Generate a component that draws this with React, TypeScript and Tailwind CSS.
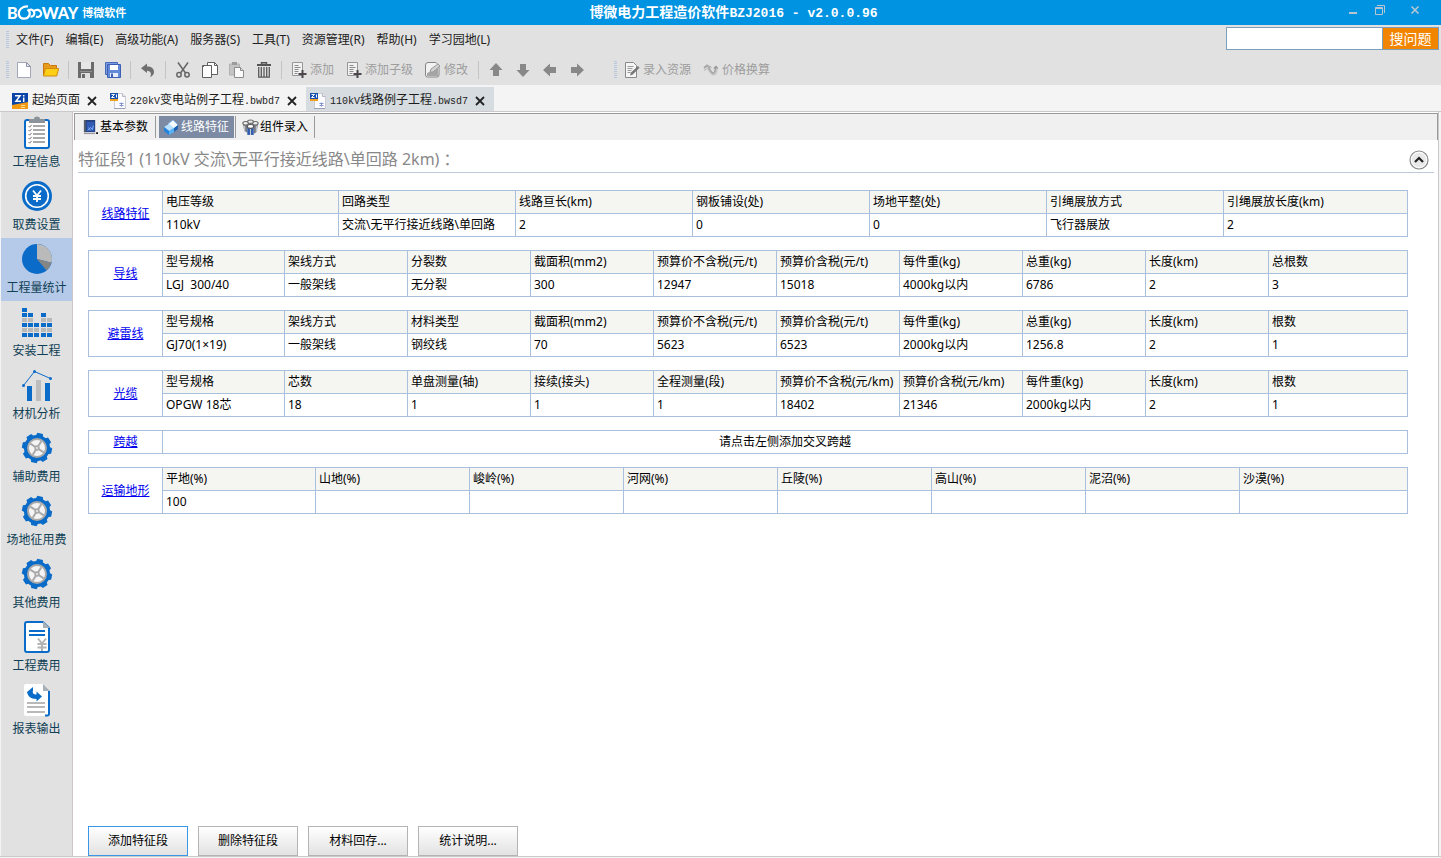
import React from "react";

type IconProps = { children: React.ReactNode; box?: string; className?: string };

function Svg({ children, box = "0 0 16 16", className = "h-4 w-4" }: IconProps) {
  return (
    <svg viewBox={box} className={`${className} shrink-0`} fill="none" aria-hidden="true">
      {children}
    </svg>
  );
}

/* ---------- toolbar icons ---------- */

const NewIcon = () => (
  <Svg>
    <path d="M1.5.5h9l4 4v11h-13z" fill="#fff" stroke="#a3a6b8" />
    <path d="M10.5.5v4h4z" fill="#e4e6ee" stroke="#8e92a8" strokeLinejoin="round" />
  </Svg>
);

const OpenIcon = () => (
  <Svg box="0 0 18 16" className="h-4 w-[18px]">
    <path d="M1.5 13V1.5h5l2 2h6V6" fill="#e79a1c" stroke="#c8780d" />
    <path d="M3.5 6.5h13.2l-2 7.5H1.4z" fill="#fdd017" stroke="#d08a10" />
  </Svg>
);

const SaveIcon = () => (
  <Svg>
    <path d="M0 0h16v16H0z" fill="#6b6b6b" />
    <path d="M3 0h10v7H3z" fill="#e6e6e6" />
    <path d="M2 9.5h12" stroke="#8e8e8e" />
    <path d="M3 11h9v5H3z" fill="#dedede" />
    <path d="M4 12h3v4H4z" fill="#6b6b6b" />
  </Svg>
);

const SaveAllIcon = () => (
  <Svg>
    <path d="M.5.5h12v12H.5z" fill="#7d9bdf" stroke="#4468ba" />
    <path d="M2.5 2.5h13v13h-13z" fill="#6288d8" stroke="#3d60b4" />
    <path d="M5 3h8v5H5z" fill="#fff" />
    <path d="M5 11h8v4H5z" fill="#e7edfb" />
    <path d="M6 11.5h2V15H6z" fill="#3d60b4" />
  </Svg>
);

const UndoIcon = () => (
  <Svg>
    <path d="M1 6.200 7 1.500v3c4.500 0 7 2 7 5.500 0 2.400-1.500 4.200-4 5.200 1.600-2.300 1.500-6.200-3-6.500V11z" fill="#6f6f6f" />
  </Svg>
);

const CutIcon = () => (
  <Svg>
    <path d="M3 .5 10.500 11M13 .5 5.500 11" stroke="#666" strokeWidth="1.500" />
    <circle cx="4" cy="12.800" r="2.200" stroke="#666" strokeWidth="1.500" />
    <circle cx="12" cy="12.800" r="2.200" stroke="#666" strokeWidth="1.500" />
  </Svg>
);

const CopyIcon = () => (
  <Svg>
    <path d="M5.500.5h7l3 3v9h-10z" fill="#fff" stroke="#606060" />
    <path d="M12.500.5v3h3" stroke="#606060" />
    <path d="M.5 3.500h9v12H.5z" fill="#fff" stroke="#606060" />
    <path d="M.5 5.500l2-2" stroke="#606060" />
  </Svg>
);

const PasteIcon = () => (
  <Svg>
    <path d="M.5 2h10v11H.5z" fill="#c4c4c4" stroke="#b2b2b2" />
    <path d="M3 0h5v3H3z" fill="#9c9c9c" />
    <path d="M5.500 5.500h6l3 3v7h-9z" fill="#fafafa" stroke="#8b8b8b" />
    <path d="M11.500 5.500v3h3" fill="#ddd" stroke="#8b8b8b" />
  </Svg>
);

const TrashIcon = () => (
  <Svg>
    <path d="M5.500 2V.7h5V2" stroke="#555" strokeWidth="1.400" />
    <path d="M1 2h14v2H1z" fill="#555" />
    <path d="M2.700 5v10.200h10.600V5M5.300 5v10M8 5v10M10.700 5v10" stroke="#5a5a5a" strokeWidth="1.300" />
  </Svg>
);

const AddIcon = () => (
  <Svg>
    <path d="M1.500.5h10v13h-10z" fill="#f2f2f2" stroke="#979797" />
    <path d="M3.500 3.500h4M3.500 5.500h6M3.500 7.500h4M3.500 9.500h4M3.500 11.500h3" stroke="#8b8b8b" />
    <path d="M11.500 8v8M7.500 12h8" stroke="#4b474b" strokeWidth="2" />
  </Svg>
);

const EditIcon = () => (
  <Svg>
    <path d="M3 .5h8l3 3V13a2 2 0 0 1-2 2H2.500a2 2 0 0 1-2-2V3A2.500 2.500 0 0 1 3 .5z" fill="#f2f2f2" stroke="#858585" />
    <path d="M2 14v-3l5-2 6-3v8z" fill="#a5a5a5" />
    <path d="m5 10 1-3 7-5 2 2-7 6z" fill="#d2d2d2" stroke="#9a9a9a" />
  </Svg>
);

const EnterIcon = () => (
  <Svg>
    <path d="M1.500.5h8l3 3v12h-11z" fill="#f5f5f5" stroke="#8a8a8a" />
    <path d="M3.500 4.500h6M3.500 6.500h5M3.500 8.500h4M3.500 10.500h3" stroke="#9b9b9b" />
    <path d="m6 13.500 1-3L14 4l1.500 1.700-7 7z" fill="#777" />
  </Svg>
);

const ConvertIcon = () => (
  <Svg>
    <path d="m1 6 3-2.500c2 0 3 7 5.500 7.500 2 .3 3-1.500 3-5.500" stroke="#a6a6a6" strokeWidth="1.800" />
    <path d="m1 8.500 3-2c2 .5 3 6 6 6.500 3 0 4-3 4-7.500" stroke="#c0c0c0" strokeWidth="1.200" />
    <path d="m10 6.500 3-3 2.500 3z" fill="#969696" />
    <path d="m5 5 2-1 1.500 2" stroke="#aaa" />
  </Svg>
);

function Arrow({ turn }: { turn: string }) {
  return (
    <Svg className={`h-4 w-4 ${turn}`}>
      <path d="m8 1 6.500 7h-3.500v6H5V8H1.500z" fill="#888" />
    </Svg>
  );
}

/* ---------- tab icons ---------- */

const StartIcon = () => (
  <Svg>
    <path d="M0 0h16v12H0z" fill="#0b45a8" />
    <path d="M0 12 16 9v7H0z" fill="#f29b12" />
    <path d="M3 2.700h5L4 8.300h5M11.700 4.500V9M11.700 2v1.500" stroke="#fff" strokeWidth="1.500" />
    <path d="M9 12.500h4M9 14.500h4" stroke="#ffdc9a" />
  </Svg>
);

const DocIcon = () => (
  <Svg>
    <path d="M4.500.5h8l3 3v12h-11z" fill="#fbfbfd" stroke="#c9cbd6" />
    <path d="M12.500.5v3h3" fill="#e6e6ee" stroke="#b5b7c6" />
    <path d="M0 0h8v6H0z" fill="#1750ad" />
    <path d="M0 6h8v2H0z" fill="#f2a01f" />
    <path d="M1.500 1.500h3l-3 3h3M6.500 1.500v3" stroke="#fff" />
    <path d="M9.500 10.500h4M9.500 12.500h4M11.500 9.500v4" stroke="#7f93cc" />
    <path d="M4 15.500h11" stroke="#9aa0b5" />
  </Svg>
);

const BookIcon = () => (
  <Svg className="h-[15px] w-[15px]">
    <path d="M1 0h12v13H1z" fill="#26437f" />
    <path d="M1 0h2v13H1z" fill="#585e6c" />
    <path d="M4 2h8v10H4z" fill="#315bb4" />
    <path d="m5 11 3-3 2 2 1-4M6 8l2 3" stroke="#84b3ff" />
    <path d="M1 14.500h12" stroke="#8c8c8c" />
    <path d="M14 13h2v2h-2z" fill="#111" />
  </Svg>
);

const BoxIcon = () => (
  <Svg>
    <path d="m5 5 5-4 5 5-4 4z" fill="#f6fbff" stroke="#8cb9e5" />
    <path d="m1 8 5-3 5 4-5 3z" fill="#b7e1ff" />
    <path d="m1 8 5 4v4L1 12z" fill="#2384e0" />
    <path d="m6 12 5-3v4l-5 3z" fill="#55b2f7" />
    <path d="m11 9 4-3v4l-4 3z" fill="#1f63b5" />
  </Svg>
);

const PartsIcon = () => (
  <Svg className="h-[17px] w-[17px]">
    <path d="M1 4h4v9l-3-2zM11 4h4l-1 8-3 2z" fill="#777b84" />
    <path d="M5 7h6v8H5z" fill="#315cae" />
    <path d="M2.500 6v6M13.500 6v6M8 9v6" stroke="#c6cad3" />
    <ellipse cx="3.500" cy="4" rx="2.700" ry="1.700" fill="#ededed" stroke="#686868" />
    <ellipse cx="12.500" cy="4" rx="2.700" ry="1.700" fill="#ededed" stroke="#686868" />
    <ellipse cx="8" cy="2.500" rx="2.700" ry="1.600" fill="#ededed" stroke="#686868" />
    <ellipse cx="8" cy="7" rx="3" ry="1.800" fill="#fff" stroke="#555" />
  </Svg>
);

const CloseIcon = () => (
  <Svg box="0 0 10 10" className="h-[10px] w-[10px]">
    <path d="m1 1 8 8M9 1 1 9" stroke="#222" strokeWidth="1.800" />
  </Svg>
);

/* ---------- sidebar icons ---------- */

const BLUE = "#0a6cc8";

const ClipboardIcon = () => (
  <Svg box="0 0 32 34" className="h-[34px] w-8">
    <rect x="4" y="4" width="24" height="28" rx="2" fill="#fff" stroke={BLUE} strokeWidth="2" />
    <path d="M8 3h5a3 2.500 0 0 1 6 0h5v4H8z" fill="#8b9299" />
    {[10, 14, 18, 22, 26].map((y) => (
      <g key={y}>
        <path d={`m7.500 ${y} 1.200 1.200 2-2.400`} stroke="#777" />
        <path d={`M12 ${y}h12`} stroke="#a9a9a9" strokeWidth="2" />
      </g>
    ))}
  </Svg>
);

const CoinIcon = () => (
  <Svg box="0 0 32 34" className="h-[34px] w-8">
    <circle cx="16" cy="17" r="15" fill={BLUE} />
    <circle cx="16" cy="17" r="11.300" stroke="#fff" strokeWidth="1.600" />
    <path d="m12 11.500 4 5 4-5M16 16v7M12 17h8M12 20h8" stroke="#fff" strokeWidth="1.800" />
  </Svg>
);

const PieIcon = () => (
  <Svg box="0 0 32 34" className="h-[34px] w-8">
    <circle cx="16" cy="17" r="15" fill={BLUE} />
    <path d="M16 17V2a15 15 0 0 1 14.500 18.800z" fill="#bababa" />
    <path d="m16 17 14.500 3.800a15 15 0 0 1-5 7.700z" fill="#858585" />
  </Svg>
);

const BLOCKS = ["b....", "bb.b.", "gg.gg", "bbbbb", "ggggg", "bbbbb"];

const BlocksIcon = () => (
  <Svg box="0 0 32 34" className="h-[34px] w-8">
    {BLOCKS.map((row, y) =>
      row.split("").map((cell, x) =>
        cell === "." ? null : (
          <rect key={`${x}-${y}`} x={1 + x * 6 + (x > 2 ? 1 : 0)} y={3 + y * 5} width="5" height="4" fill={cell === "b" ? BLUE : "#b9b9b9"} />
        ),
      ),
    )}
  </Svg>
);

const ChartIcon = () => (
  <Svg box="0 0 32 34" className="h-[34px] w-8">
    <path d="M6 18h5v15H6zM24 15h5v18h-5z" fill={BLUE} />
    <path d="M15 12h5v21h-5z" fill="#bdbdbd" />
    <path d="M2.500 17.500 13.500 3.500l16 7" stroke={BLUE} />
    <circle cx="2.500" cy="17.500" r="1.500" fill={BLUE} />
    <circle cx="13.500" cy="3.500" r="1.500" fill={BLUE} />
    <circle cx="29.500" cy="10.500" r="1.500" fill={BLUE} />
  </Svg>
);

const GearIcon = () => (
  <Svg box="0 0 32 34" className="h-[34px] w-8">
    <circle cx="16" cy="17" r="13" fill={BLUE} />
    {[12, 57, 102, 147, 192, 237, 282, 327].map((a) => (
      <path key={a} d="m12 6 1.200-4h5.600L20 6z" fill={BLUE} transform={`rotate(${a} 16 17)`} />
    ))}
    <circle cx="16" cy="17" r="9" fill="#f4f4f4" stroke="#a9a9a9" strokeWidth="2" />
    {[33, 123, 213, 303].map((a) => (
      <path key={a} d="M16 17V9" stroke="#a9a9a9" strokeWidth="2" transform={`rotate(${a} 16 17)`} />
    ))}
    <circle cx="16" cy="17" r="2.700" fill="#a9a9a9" />
    <circle cx="16" cy="17" r="1" fill="#eee" />
  </Svg>
);

const FeeIcon = () => (
  <Svg box="0 0 32 34" className="h-[34px] w-8">
    <path d="M6 2h16l6 6v22a2 2 0 0 1-2 2H6a2 2 0 0 1-2-2V4a2 2 0 0 1 2-2z" fill="#fff" stroke={BLUE} strokeWidth="2" />
    <path d="M22 1v7h7z" fill="#a7b0b9" />
    <path d="M8 11h16M8 15h16" stroke={BLUE} strokeWidth="2" />
    <path d="m17 18.500 4 5 4-5M21 23v8M16.500 24h9M16.500 27.500h9" stroke="#b3b3b3" strokeWidth="2" />
  </Svg>
);

const ReportIcon = () => (
  <Svg box="0 0 32 34" className="h-[34px] w-8">
    <path d="M5 1h17l7 7v23a2 2 0 0 1-2 2H5a2 2 0 0 1-2-2V3a2 2 0 0 1 2-2z" fill="#fff" />
    <path d="M22 1v7h7z" fill="#a7b0b9" />
    <path d="M28 8v23a1.500 1.500 0 0 1-1.500 1.500H24" stroke={BLUE} strokeWidth="2" />
    <path d="m6 9 6-5v3.500c-1 3 1 4 3.500 4V8.500l5.500 5-5.500 5V16C9 16 7 13 6 9z" fill={BLUE} />
    <path d="M6 20h18M6 24h18M6 29h18" stroke="#b9b9b9" strokeWidth="2" />
  </Svg>
);

/* ---------- data ---------- */

const MENUS = ["文件(F)", "编辑(E)", "高级功能(A)", "服务器(S)", "工具(T)", "资源管理(R)", "帮助(H)", "学习园地(L)"];

const SIDE = [
  { label: "工程信息", Icon: ClipboardIcon },
  { label: "取费设置", Icon: CoinIcon },
  { label: "工程量统计", Icon: PieIcon, active: true },
  { label: "安装工程", Icon: BlocksIcon },
  { label: "材机分析", Icon: ChartIcon },
  { label: "辅助费用", Icon: GearIcon },
  { label: "场地征用费", Icon: GearIcon },
  { label: "其他费用", Icon: GearIcon },
  { label: "工程费用", Icon: FeeIcon },
  { label: "报表输出", Icon: ReportIcon },
];

const GRIDS = [
  {
    title: "线路特征",
    first: "w-[176px]",
    col: "w-[177px]",
    head: ["电压等级", "回路类型", "线路亘长(km)", "钢板铺设(处)", "场地平整(处)", "引绳展放方式", "引绳展放长度(km)"],
    row: ["110kV", "交流\\无平行接近线路\\单回路", "2", "0", "0", "飞行器展放", "2"],
  },
  {
    title: "导线",
    first: "w-[122px]",
    col: "w-[123px]",
    head: ["型号规格", "架线方式", "分裂数", "截面积(mm2)", "预算价不含税(元/t)", "预算价含税(元/t)", "每件重(kg)", "总重(kg)", "长度(km)", "总根数"],
    row: ["LGJ  300/40", "一般架线", "无分裂", "300", "12947", "15018", "4000kg以内", "6786", "2", "3"],
  },
  {
    title: "避雷线",
    first: "w-[122px]",
    col: "w-[123px]",
    head: ["型号规格", "架线方式", "材料类型", "截面积(mm2)", "预算价不含税(元/t)", "预算价含税(元/t)", "每件重(kg)", "总重(kg)", "长度(km)", "根数"],
    row: ["GJ70(1×19)", "一般架线", "钢绞线", "70", "5623", "6523", "2000kg以内", "1256.8", "2", "1"],
  },
  {
    title: "光缆",
    first: "w-[122px]",
    col: "w-[123px]",
    head: ["型号规格", "芯数", "单盘测量(轴)", "接续(接头)", "全程测量(段)", "预算价不含税(元/km)", "预算价含税(元/km)", "每件重(kg)", "长度(km)", "根数"],
    row: ["OPGW 18芯", "18", "1", "1", "1", "18402", "21346", "2000kg以内", "2", "1"],
  },
  { title: "跨越", first: "", col: "", head: [], row: [], note: "请点击左侧添加交叉跨越" },
  {
    title: "运输地形",
    first: "w-[153px]",
    col: "w-[154px]",
    head: ["平地(%)", "山地(%)", "峻岭(%)", "河网(%)", "丘陵(%)", "高山(%)", "泥沼(%)", "沙漠(%)"],
    row: ["100", "", "", "", "", "", "", ""],
  },
];

/* ---------- parts ---------- */

function IconButton({ label, children }: { label: string; children: React.ReactNode }) {
  return (
    <button type="button" aria-label={label} className="flex h-6 w-[27px] items-center justify-center">
      {children}
    </button>
  );
}

function TextButton({ label, children }: { label: string; children: React.ReactNode }) {
  return (
    <button type="button" className="flex h-6 items-center gap-[3px] px-[6px] whitespace-nowrap text-[#9d9d9d]">
      {children}
      {label}
    </button>
  );
}

const Sep = () => (
  <span className="flex w-2 justify-center">
    <span className="h-[18px] w-px bg-[#c3c3c8]" />
  </span>
);

const Grip = ({ className }: { className: string }) => (
  <span className={`w-[3px] bg-[repeating-linear-gradient(#b9c7dc_0_1px,transparent_1px_2px)] ${className}`} />
);

function FileTab({ icon, cjk, before = "", after = "", active = false }: { icon: React.ReactNode; cjk: string; before?: string; after?: string; active?: boolean }) {
  return (
    <div className={`flex h-6 items-center pt-[3px] pr-[9px] pl-1 ${active ? "bg-[#d7dce0]" : ""}`}>
      <button type="button" className="flex items-center gap-1 whitespace-nowrap text-[#1c1c1c]">
        {icon}
        <span>
          <span className="font-['Liberation_Mono',monospace] text-[10px]">{before}</span>
          {cjk}
          <span className="font-['Liberation_Mono',monospace] text-[10px]">{after}</span>
        </span>
      </button>
      <button type="button" aria-label="关闭" className="ml-[7px]">
        <CloseIcon />
      </button>
    </div>
  );
}

function Grid({ grid }: { grid: (typeof GRIDS)[number] }) {
  const link = (
    <a href="#" className="text-[#0000ee] underline">
      {grid.title}
    </a>
  );
  const line = "border border-[#a9c0dc]";
  if (grid.note) {
    return (
      <table className="w-full table-fixed border-collapse">
        <tbody>
          <tr className="h-[23px]">
            <th className={`${line} w-[74px] p-0 font-normal`}>{link}</th>
            <td className={`${line} p-0 text-center`}>{grid.note}</td>
          </tr>
        </tbody>
      </table>
    );
  }
  const width = (i: number) => (i === 0 ? grid.first : i < grid.head.length - 1 ? grid.col : "");
  return (
    <table className="w-full table-fixed border-collapse">
      <colgroup>
        <col className="w-[74px]" />
        {grid.head.map((h, i) => (
          <col key={h} className={width(i)} />
        ))}
      </colgroup>
      <tbody>
        <tr className="h-[23px]">
          <th rowSpan={2} className={`${line} p-0 font-normal`}>
            {link}
          </th>
          {grid.head.map((h) => (
            <th key={h} scope="col" className={`${line} bg-[#f5f5f2] p-0 pl-[3px] text-left font-normal whitespace-nowrap`}>
              {h}
            </th>
          ))}
        </tr>
        <tr className="h-[23px]">
          {grid.row.map((v, i) => (
            <td key={i} className={`${line} p-0 pl-[3px] whitespace-pre`}>
              {v}
            </td>
          ))}
        </tr>
      </tbody>
    </table>
  );
}

/* ---------- page ---------- */

export default function App() {
  return (
    <div className="flex min-h-screen flex-col bg-[#f4f4f4] font-['Noto_Sans','Noto_Sans_CJK_SC',sans-serif] text-[12px] leading-4 text-black">
      <header className="grid h-[25px] grid-cols-[1fr_auto_1fr] items-center bg-[#0093e1] text-white">
        <div className="flex items-center gap-1 pl-[7px]">
          <span className="flex items-center font-['Lato',sans-serif] text-[16px] font-black">
            B
            <svg viewBox="0 0 26 16" className="-mx-px h-4 w-[26px]" fill="none" aria-hidden="true">
              <path d="M11 1.500C5 1 1 5 2 10c1 4.500 8 5 10 1 1.500-3 1-5-1.500-6.500M11 6c2-2 5-2 6 1s-1 5-3.500 4.500M17 6c2-2 6-1.500 7 1.500s-2 5.500-5 4" stroke="#fff" strokeWidth="2.200" />
            </svg>
            WAY
          </span>
          <span className="text-[11px] font-bold">博微软件</span>
        </div>
        <h1 className="pl-[26px] text-[14px] font-bold whitespace-pre">
          博微电力工程造价软件
          <span className="font-['Liberation_Mono',monospace] text-[13px]">BZJ2016 - v2.0.0.96</span>
        </h1>
        <div className="flex items-center justify-end gap-4 pr-[21px] pb-[6px] text-[#b8c6d2]">
          <button type="button" aria-label="最小化">
            <Svg box="0 0 10 10" className="h-[10px] w-[10px]">
              <path d="M1 8h8" stroke="currentColor" strokeWidth="2" />
            </Svg>
          </button>
          <button type="button" aria-label="还原">
            <Svg box="0 0 12 12" className="h-3 w-3">
              <path d="M1.500 3.500h7v7h-7zM3 1.500h7.500V9M1 4.500h8" stroke="currentColor" />
            </Svg>
          </button>
          <button type="button" aria-label="关闭窗口" className="ml-2">
            <Svg box="0 0 10 10" className="h-[10px] w-[10px]">
              <path d="m1.500 1.500 7 7M8.500 1.500l-7 7" stroke="currentColor" strokeWidth="1.600" />
            </Svg>
          </button>
        </div>
      </header>

      <div className="flex h-[30px] items-center bg-[#e1e1e1] pr-[2px] pl-[6px]">
        <Grip className="mr-[7px] h-[18px]" />
        <nav className="flex gap-3 whitespace-nowrap">
          {MENUS.map((m) => (
            <button key={m} type="button" className="text-[#222]">
              {m}
            </button>
          ))}
        </nav>
        <form className="mt-[2px] ml-auto flex h-[23px] self-start" onSubmit={(e) => e.preventDefault()}>
          <input aria-label="搜索问题" className="w-[157px] border border-[#7d9fbe] bg-white px-1 outline-none" />
          <button type="submit" className="w-[56px] border border-l-0 border-[#7d9fbe] bg-[#f28500] text-[14px] text-white">
            搜问题
          </button>
        </form>
      </div>

      <div className="flex h-[30px] items-center bg-[#e1e1e1] pl-[6px]">
        <Grip className="mr-px h-[18px]" />
        <IconButton label="新建"><NewIcon /></IconButton>
        <IconButton label="打开"><OpenIcon /></IconButton>
        <Sep />
        <IconButton label="保存"><SaveIcon /></IconButton>
        <IconButton label="全部保存"><SaveAllIcon /></IconButton>
        <Sep />
        <IconButton label="撤销"><UndoIcon /></IconButton>
        <Sep />
        <IconButton label="剪切"><CutIcon /></IconButton>
        <IconButton label="复制"><CopyIcon /></IconButton>
        <IconButton label="粘贴"><PasteIcon /></IconButton>
        <IconButton label="删除"><TrashIcon /></IconButton>
        <Sep />
        <TextButton label="添加"><AddIcon /></TextButton>
        <TextButton label="添加子级"><AddIcon /></TextButton>
        <TextButton label="修改"><EditIcon /></TextButton>
        <Sep />
        <IconButton label="上移"><Arrow turn="" /></IconButton>
        <IconButton label="下移"><Arrow turn="rotate-180" /></IconButton>
        <IconButton label="左移"><Arrow turn="-rotate-90" /></IconButton>
        <IconButton label="右移"><Arrow turn="rotate-90" /></IconButton>
        <Grip className="mr-px ml-6 h-[18px]" />
        <TextButton label="录入资源"><EnterIcon /></TextButton>
        <TextButton label="价格换算"><ConvertIcon /></TextButton>
      </div>

      <div className="flex h-[26px] items-end pl-2">
        <FileTab icon={<StartIcon />} cjk="起始页面" />
        <FileTab icon={<DocIcon />} before="220kV" cjk="变电站例子工程" after=".bwbd7" />
        <FileTab icon={<DocIcon />} before="110kV" cjk="线路例子工程" after=".bwsd7" active />
      </div>

      <div className="mb-px flex flex-1 border-y border-[#cbc8cc] pl-px">
        <aside className="w-[72px] shrink-0 border-r border-[#cbc5ca] bg-[#e1e1e1]">
          {SIDE.map(({ label, Icon, active }) => (
            <button
              key={label}
              type="button"
              className={`flex h-[63px] w-full flex-col items-center gap-1 pt-1 whitespace-nowrap text-[#0f4055] ${active ? "bg-[#b5c9e8]" : ""}`}
            >
              <Icon />
              <span>{label}</span>
            </button>
          ))}
        </aside>

        <main className="mr-[2px] flex min-w-0 flex-1 flex-col border-r border-[#cbc8cc] bg-white pt-px pl-px">
          <div className="flex h-[27px] items-center border-t border-r border-l border-[#999] bg-[#f0f0f0] text-black">
            <button type="button" className="flex h-[22px] items-center gap-[2px] pr-[7px] pl-2">
              <BookIcon />
              基本参数
            </button>
            <span className="mr-[3px] h-[22px] w-px bg-[#999]" />
            <button type="button" className="flex h-[22px] items-center gap-[2px] bg-[#7c8aa3] px-1 pr-[5px] text-white">
              <BoxIcon />
              线路特征
            </button>
            <span className="ml-px h-[22px] w-px bg-[#999]" />
            <button type="button" className="flex h-[22px] items-center gap-px px-[6px]">
              <PartsIcon />
              组件录入
            </button>
            <span className="h-[22px] w-px bg-[#999]" />
          </div>

          <section className="flex flex-1 flex-col pr-1 pl-1">
            <div className="flex h-[33px] items-end justify-between border-b border-[#bccbdc] pr-[5px] pb-px">
              <h2 className="text-[16px] leading-6 text-[#888]">特征段1 (110kV 交流\无平行接近线路\单回路 2km) ：</h2>
              <button type="button" aria-label="收起">
                <Svg box="0 0 20 20" className="mb-px h-5 w-5">
                  <circle cx="10" cy="10" r="9" fill="#e9e9e9" stroke="#888" strokeWidth="1.200" />
                  <circle cx="10" cy="10" r="7.700" stroke="#fff" />
                  <path d="m6 12 4-4 4 4" stroke="#222" strokeWidth="2.200" />
                </Svg>
              </button>
            </div>
            <div className="flex flex-col gap-[13px] pt-[17px] pr-[26px] pl-[10px]">
              {GRIDS.map((g) => (
                <Grid key={g.title} grid={g} />
              ))}
            </div>
            <div className="mt-auto flex gap-[10px] pl-[10px]">
              {["添加特征段", "删除特征段", "材料回存...", "统计说明..."].map((b, i) => (
                <button
                  key={b}
                  type="button"
                  className={`h-[30px] w-[100px] border bg-linear-to-b from-white to-[#e2e2e2] ${i === 0 ? "border-[#3c96e8]" : "border-[#b4b4b4]"}`}
                >
                  {b}
                </button>
              ))}
            </div>
          </section>
        </main>
      </div>
    </div>
  );
}
